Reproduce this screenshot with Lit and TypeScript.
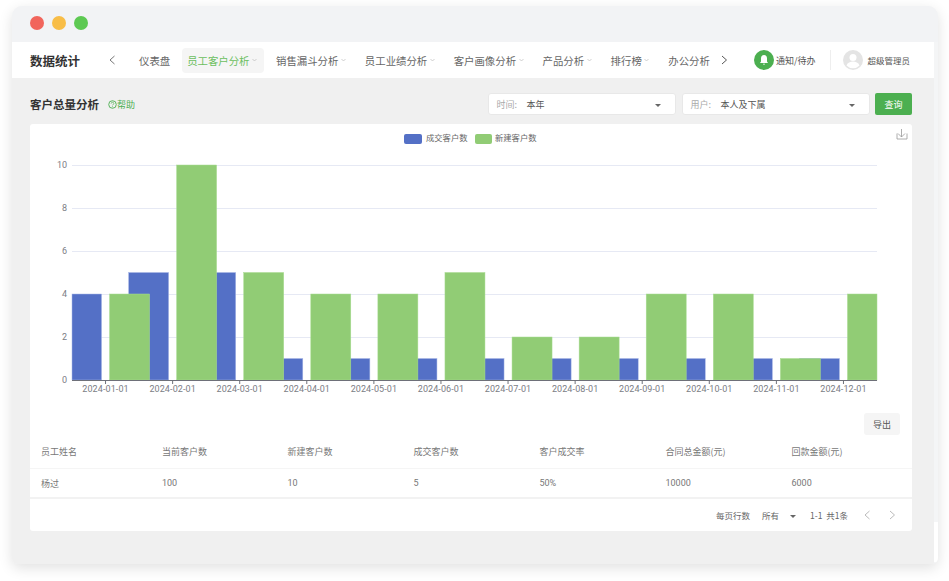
import { LitElement, html, css, svg } from 'lit';
import { customElement } from 'lit/decorators.js';

const months = ['01', '02', '03', '04', '05', '06', '07', '08', '09', '10', '11', '12'];
const closed = [4, 5, 5, 1, 1, 1, 1, 1, 1, 1, 1, 1];
const created = [4, 10, 5, 4, 4, 5, 2, 2, 4, 4, 1, 4];

const navItems = [
  { label: '仪表盘', arrow: false },
  { label: '员工客户分析', arrow: true, active: true },
  { label: '销售漏斗分析', arrow: true },
  { label: '员工业绩分析', arrow: true },
  { label: '客户画像分析', arrow: true },
  { label: '产品分析', arrow: true },
  { label: '排行榜', arrow: true },
  { label: '办公分析', arrow: false },
];

const headers = ['员工姓名', '当前客户数', '新建客户数', '成交客户数', '客户成交率', '合同总金额(元)', '回款金额(元)'];
const row = ['杨过', '100', '10', '5', '50%', '10000', '6000'];

// plot area, in the chart's own coordinates
const left = 42;
const right = 847;
const base = 256;
const step = (right - left) / 12;
const unit = 21.5;

@customElement('bar-chart')
export class BarChart extends LitElement {
  static styles = css`
    :host {
      display: block;
      height: 289px;
    }
    svg {
      display: block;
    }
    text {
      font-family: 'Roboto', 'Noto Sans CJK SC', sans-serif;
      font-size: 9px;
      fill: #7b7d85;
    }
    .legend {
      font-size: 8.3px;
      fill: #666;
    }
  `;

  private bar(from: number, to: number, value: number, fill: string, edge: string) {
    const x = Math.max(from, left);
    const w = Math.min(to, right) - x;
    return svg`<rect x=${x} y=${base - value * unit} width=${w} height=${value * unit} fill=${fill} stroke=${edge} stroke-width="0.5"></rect>`;
  }

  render() {
    const centres = months.map((_, i) => left + step * i + step / 2);
    // green series goes on top of the blue one
    const blue = centres.map((c, i) => this.bar(c - 44, c - 4, closed[i], '#5470c6', '#a9b8e6'));
    const green = centres.map((c, i) => this.bar(c + 4, c + 44, created[i], '#91cc75', '#a9dc92'));
    const grid = [2, 4, 6, 8, 10].map(
      (v) => svg`<line x1=${left} x2=${right} y1=${base - v * unit + 0.5} y2=${base - v * unit + 0.5} stroke="#e6e9f4"></line>`,
    );
    const yLabels = [0, 2, 4, 6, 8, 10].map(
      (v) => svg`<text x="37" y=${base - v * unit + 3} text-anchor="end">${v}</text>`,
    );
    const xLabels = months.map((m, i) => svg`
      <line x1=${centres[i]} x2=${centres[i]} y1=${base} y2=${base + 4} stroke="#6e7079"></line>
      <text x=${centres[i]} y="268" text-anchor="middle" letter-spacing="0.1">2024-${m}-01</text>`);
    return html`
      <svg width="882" height="289" viewBox="0 0 882 289">
        <rect x="374" y="10" width="18" height="10" rx="2" fill="#5470c6"></rect>
        <text class="legend" x="396" y="17">成交客户数</text>
        <rect x="445" y="10" width="17" height="10" rx="2" fill="#91cc75"></rect>
        <text class="legend" x="465" y="17">新建客户数</text>
        <path
          d="M871.500 5v8M868 9.500l3.500 3.500 3.500-3.500M867 9.500v5.500h10v-5.500"
          fill="none"
          stroke="#999"
          stroke-width="0.8"
        ></path>
        ${grid}${blue}${green}
        <line x1=${left} x2=${right} y1=${base + 0.5} y2=${base + 0.5} stroke="#6e7079"></line>
        ${yLabels}${xLabels}
      </svg>
    `;
  }
}

@customElement('app-root')
export class AppRoot extends LitElement {
  static styles = css`
    :host {
      display: block;
      height: 581px;
      background: #fff;
      padding: 6px 11px 17px 12px;
      box-sizing: border-box;
      font-family: 'Noto Sans CJK SC', 'Noto Sans', sans-serif;
      color: #555;
    }
    .window {
      height: 558px;
      background: #f4f5f6;
      border-radius: 10px 10px 6px 6px;
      box-shadow: 0 4px 14px rgba(0, 0, 0, 0.12);
      display: flex;
      flex-direction: column;
      overflow: hidden;
    }
    .titlebar {
      height: 36px;
      flex: none;
      background: #f2f3f5;
      display: flex;
      align-items: center;
      gap: 8px;
      padding: 0 0 2px 18px;
      box-sizing: border-box;
    }
    .dot {
      width: 14px;
      height: 14px;
      border-radius: 50%;
    }
    .frame {
      flex: 1;
      display: flex;
      min-height: 0;
    }
    .main {
      flex: 1;
      background: #f0f0f0;
      display: flex;
      flex-direction: column;
      min-width: 0;
    }
    .gutter {
      flex: none;
      width: 4px;
      display: flex;
      flex-direction: column;
      justify-content: flex-end;
      padding-bottom: 2px;
    }
    .thumb {
      height: 40px;
      background: #fff;
    }
    .nav {
      height: 36px;
      flex: none;
      background: #fff;
      display: flex;
      align-items: center;
      padding-left: 18px;
    }
    .brand {
      font-size: 12.500px;
      font-weight: 700;
      color: #333;
      width: 77px;
    }
    .chev {
      flex: none;
      display: block;
    }
    .items {
      display: flex;
      align-items: center;
      margin-left: 17px;
      width: 585px;
      flex: none;
      overflow: hidden;
    }
    .item {
      flex: none;
      height: 25px;
      display: flex;
      align-items: center;
      font-size: 10.400px;
      padding: 0 5px;
      margin-right: 7px;
      border-radius: 4px;
      color: #666;
    }
    .item.has-caret {
      padding-right: 7px;
    }
    .item.active {
      background: #f5f5f5;
      color: #6cbf5f;
    }
    .caret {
      margin-left: 2.500px;
      display: block;
    }
    .notice {
      display: flex;
      align-items: center;
      gap: 2px;
      margin-left: 25px;
      font-size: 9px;
      padding-right: 14px;
      border-right: 1px solid #eee;
      height: 20px;
      flex: none;
    }
    .bell {
      width: 20px;
      height: 20px;
      border-radius: 50%;
      background: #4caf50;
      display: flex;
      align-items: center;
      justify-content: center;
    }
    .user {
      display: flex;
      align-items: center;
      gap: 5px;
      margin-left: 12px;
      font-size: 8.500px;
      flex: none;
    }
    .content {
      flex: 1;
      padding: 15px 22px 0 18px;
      display: flex;
      flex-direction: column;
    }
    .toolbar {
      height: 22px;
      display: flex;
      align-items: center;
      margin-bottom: 9px;
    }
    .heading {
      font-size: 11.500px;
      font-weight: 700;
      color: #333;
    }
    .help {
      display: flex;
      align-items: center;
      margin-left: 9px;
      font-size: 9px;
      color: #4caf50;
      flex: 1;
    }
    .select {
      width: 188px;
      height: 22px;
      background: #fff;
      border-radius: 3px;
      border: 1px solid #e8e8e8;
      display: flex;
      align-items: center;
      font-size: 9px;
      padding: 0 14px 0 8px;
      box-sizing: border-box;
      margin-right: 6px;
    }
    .select + .select {
      margin-right: 5.500px;
    }
    .select .name {
      color: #aaa;
      margin-right: 9.500px;
    }
    .select .value {
      flex: 1;
      color: #555;
    }
    .arrow {
      width: 0;
      height: 0;
      border-left: 3.500px solid transparent;
      border-right: 3.500px solid transparent;
      border-top: 3.500px solid #666;
      margin-top: 2px;
    }
    .query {
      width: 37px;
      height: 22px;
      background: #4caf50;
      color: #fff;
      border-radius: 2px;
      font-size: 9px;
      display: flex;
      align-items: center;
      justify-content: center;
    }
    .card {
      background: #fff;
      border-radius: 3px;
      height: 407px;
    }
    .export-row {
      display: flex;
      justify-content: flex-end;
      padding-right: 12px;
      height: 22px;
    }
    .export {
      width: 36px;
      height: 22px;
      background: #f5f5f5;
      border-radius: 3px;
      font-size: 9px;
      display: flex;
      align-items: center;
      justify-content: center;
    }
    .row {
      display: grid;
      grid-template-columns: 121px 125.500px 126px 126px 126px 126px 1fr;
      padding-left: 11px;
      font-size: 9px;
      align-items: center;
      color: #777;
      border-bottom: 1px solid #f5f5f5;
    }
    .row.head {
      height: 33px;
    }
    .row.body {
      height: 28px;
      border-bottom: 2px solid #f2f2f2;
    }
    .num {
      font-family: 'Roboto', 'Noto Sans CJK SC', sans-serif;
    }
    .pager {
      height: 32px;
      display: flex;
      align-items: center;
      justify-content: flex-end;
      font-size: 8.500px;
      color: #666;
      padding-right: 15px;
    }
  `;

  private chevron(dir: 'l' | 'r', colour = '#777') {
    const d = dir === 'l' ? 'M7.500 2 3 6 7.500 10' : 'M3 2 7.500 6 3 10';
    return html`<svg class="chev" width="10" height="12" viewBox="0 0 10 12">
      <path d=${d} fill="none" stroke=${colour} stroke-width="1"></path>
    </svg>`;
  }

  render() {
    return html`
      <div class="window">
        <div class="titlebar">
          <div class="dot" style="background:#f1655c"></div>
          <div class="dot" style="background:#f8bd47"></div>
          <div class="dot" style="background:#5dc952"></div>
        </div>
        <div class="frame">
          <div class="main">
            <div class="nav">
              <div class="brand">数据统计</div>
              ${this.chevron('l')}
              <div class="items">
                ${navItems.map(
                  (it) => html`<div class="item ${it.active ? 'active' : ''} ${it.arrow ? 'has-caret' : ''}">
                    ${it.label}${it.arrow
                      ? html`<svg class="caret" width="5" height="4" viewBox="0 0 5 4">
                          <path d="M.5 1 2.500 3 4.500 1" fill="none" stroke="#bbb" stroke-width="0.7"></path>
                        </svg>`
                      : ''}
                  </div>`,
                )}
              </div>
              ${this.chevron('r', '#555')}
              <div class="notice">
                <div class="bell">
                  <svg width="12" height="12" viewBox="0 0 12 12">
                    <path d="M6 1C4 1 3 2.500 3 4.500V7.500L2 9H10L9 7.500V4.500C9 2.500 8 1 6 1ZM5 9.800a1 1 0 0 0 2 0Z" fill="#fff"></path>
                  </svg>
                </div>
                通知/待办
              </div>
              <div class="user">
                <svg width="20" height="20" viewBox="0 0 20 20">
                  <circle cx="10" cy="10" r="10" fill="#e4e4e4"></circle>
                  <circle cx="10" cy="7.500" r="3.500" fill="#fff"></circle>
                  <path d="M3.500 15.500c1-3 4-4 6.500-4s5.500 1 6.500 4a9 9 0 0 1-13 0Z" fill="#fff"></path>
                </svg>
                超级管理员
              </div>
            </div>
            <div class="content">
              <div class="toolbar">
                <div class="heading">客户总量分析</div>
                <div class="help">
                  <svg width="9" height="9" viewBox="0 0 10 10">
                    <circle cx="5" cy="5" r="4.200" fill="none" stroke="#4caf50"></circle>
                    <path d="M3.500 4c0-2 3-2 3 0 0 1-1.500 1-1.500 2M5 7v1" fill="none" stroke="#4caf50" stroke-width="0.800"></path>
                  </svg>
                  帮助
                </div>
                <div class="select">
                  <span class="name">时间:</span><span class="value">本年</span>
                  <div class="arrow"></div>
                </div>
                <div class="select">
                  <span class="name">用户:</span><span class="value">本人及下属</span>
                  <div class="arrow"></div>
                </div>
                <div class="query">查询</div>
              </div>
              <div class="card">
                <bar-chart></bar-chart>
                <div class="export-row"><div class="export">导出</div></div>
                <div class="row head">${headers.map((h) => html`<div>${h}</div>`)}</div>
                <div class="row body">${row.map((c) => html`<div class="num">${c}</div>`)}</div>
                <div class="pager">
                  <span>每页行数</span>
                  <span style="margin-left:12px">所有</span>
                  <div class="arrow" style="margin-left:11px"></div>
                  <span style="margin-left:14px">1-1&nbsp; 共1条</span>
                  <span style="margin-left:14px">${this.chevron('l', '#bbb')}</span>
                  <span style="margin-left:15px">${this.chevron('r', '#bbb')}</span>
                </div>
              </div>
            </div>
          </div>
          <div class="gutter"><div class="thumb"></div></div>
        </div>
      </div>
    `;
  }
}
